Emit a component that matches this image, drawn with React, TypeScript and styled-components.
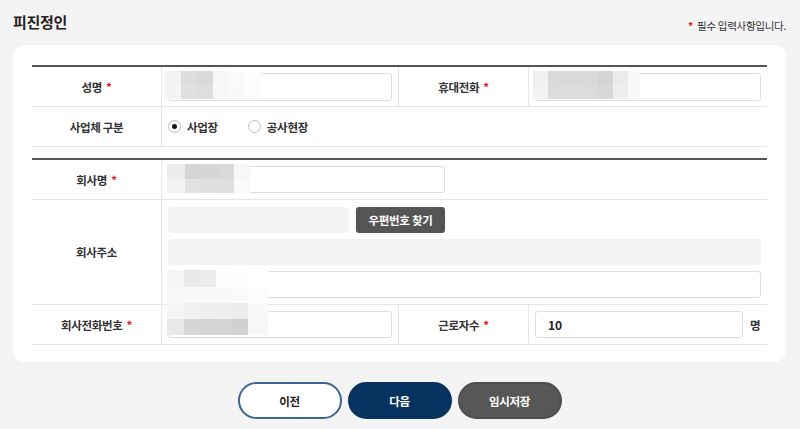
import React from "react";
import styled, { createGlobalStyle } from "styled-components";

const Global = createGlobalStyle`
  html, body { margin: 0; padding: 0; background: #f4f4f4; }
  body { font-family: "Noto Sans CJK KR", "Noto Sans", sans-serif; color: #333; }
  * { box-sizing: border-box; }
`;

const Page = styled.div`
  position: relative;
  width: 800px;
  height: 429px;
  padding: 0 14px 0 13px;
  background: #f4f4f4;
`;

const Header = styled.div`
  height: 45px;
  display: flex;
  align-items: center;
  justify-content: space-between;
`;

const Title = styled.h2`
  margin: 0 0 2px 0;
  font-size: 15px;
  font-weight: 700;
  color: #222;
  letter-spacing: -0.3px;
`;

const Note = styled.span`
  margin-top: 6px;
  font-size: 10.5px;
  color: #333;
  letter-spacing: -0.3px;
`;

const Star = styled.span<{ $lead?: boolean }>`
  color: #e3141c;
  font-weight: 700;
  margin: ${(p) => (p.$lead ? "0 4px 0 0" : "0 0 0 4px")};
`;

const Card = styled.div`
  background: #fff;
  border-radius: 12px;
  padding: 20px 19px 19px 19px;
  height: 317px;
`;

const Table = styled.div<{ $gap?: number }>`
  display: grid;
  grid-template-columns: 130px 237px 130px 1fr;
  border-top: 2px solid #555;
  margin-top: ${(p) => p.$gap ?? 0}px;
`;

const Label = styled.div<{ $h?: number }>`
  height: ${(p) => p.$h ?? 40}px;
  display: flex;
  align-items: center;
  justify-content: center;
  font-size: 11.5px;
  font-weight: 700;
  color: #333;
  border-bottom: 1px solid #e6e6e6;
  border-right: 1px solid #e6e6e6;
  letter-spacing: -0.3px;
`;

const Cell = styled.div<{ $span?: number; $last?: boolean; $col?: boolean }>`
  grid-column: span ${(p) => p.$span ?? 1};
  display: flex;
  flex-direction: ${(p) => (p.$col ? "column" : "row")};
  align-items: ${(p) => (p.$col ? "stretch" : "center")};
  justify-content: ${(p) => (p.$col ? "center" : "flex-start")};
  gap: 6px;
  padding: 0 6px;
  border-bottom: 1px solid #e6e6e6;
  border-right: ${(p) => (p.$last ? "none" : "1px solid #e6e6e6")};
`;

const Input = styled.div<{ $w?: number; $h?: number; $gray?: boolean }>`
  width: ${(p) => (p.$w ? `${p.$w}px` : "100%")};
  flex: none;
  height: ${(p) => p.$h ?? 27}px;
  border: 1px solid ${(p) => (p.$gray ? "#f3f3f3" : "#dedede")};
  background: ${(p) => (p.$gray ? "#f3f3f3" : "#fff")};
  border-radius: 3px;
  display: flex;
  align-items: center;
  padding: 0 12px;
  font-size: 12px;
  font-weight: 700;
  color: #222;
`;

const InputLine = styled.div`
  display: flex;
  align-items: center;
  gap: 7px;
`;

const DarkButton = styled.button`
  width: 89px;
  height: 26px;
  border: none;
  border-radius: 3px;
  background: #555;
  color: #fff;
  font-family: inherit;
  font-size: 11.5px;
  font-weight: 700;
  letter-spacing: -0.3px;
  padding: 0;
`;

const Unit = styled.span`
  font-size: 11.5px;
  font-weight: 700;
  color: #333;
  margin-left: 1px;
`;

const RadioGroup = styled.div`
  display: flex;
  align-items: center;
  gap: 30px;
`;

const RadioItem = styled.label`
  display: flex;
  align-items: center;
  gap: 6px;
  font-size: 11.5px;
  font-weight: 700;
  color: #333;
  letter-spacing: -0.3px;
`;

const RadioDot = styled.span<{ $on?: boolean }>`
  width: 13px;
  height: 13px;
  border-radius: 50%;
  border: 1px solid #bdbdbd;
  background: #fff;
  display: flex;
  align-items: center;
  justify-content: center;
  &::after {
    content: "";
    width: 5px;
    height: 5px;
    border-radius: 50%;
    background: ${(p) => (p.$on ? "#111" : "transparent")};
  }
`;

const Buttons = styled.div`
  display: flex;
  justify-content: center;
  gap: 6px;
  margin-top: 20px;
`;

const Pill = styled.button<{ $variant: "outline" | "navy" | "gray" }>`
  width: 104px;
  height: 37px;
  border-radius: 19px;
  font-family: inherit;
  font-size: 11.5px;
  font-weight: 700;
  letter-spacing: -0.3px;
  border: 2px solid
    ${(p) => (p.$variant === "outline" ? "#3c6592" : p.$variant === "navy" ? "#0a3360" : "#4d4d4d")};
  background: ${(p) => (p.$variant === "outline" ? "#fff" : p.$variant === "navy" ? "#06335f" : "#575757")};
  color: ${(p) => (p.$variant === "outline" ? "#222" : "#fff")};
`;

const MosaicBox = styled.div`
  position: absolute;
  display: flex;
  flex-direction: column;
  pointer-events: none;
`;

const MosaicRow = styled.div`
  display: flex;
`;

const Tile = styled.div`
  flex: none;
`;

type MosaicProps = { x: number; y: number; cw: number[]; rh: number[]; colors: string[][] };

const Mosaic = ({ x, y, cw, rh, colors }: MosaicProps) => (
  <MosaicBox style={{ left: x, top: y }}>
    {colors.map((row, ri) => (
      <MosaicRow key={ri}>
        {row.map((c, ci) => (
          <Tile key={ci} style={{ width: cw[ci], height: rh[ri], background: c }} />
        ))}
      </MosaicRow>
    ))}
  </MosaicBox>
);

export default function App() {
  return (
    <>
      <Global />
      <Page>
        <Header>
          <Title>피진정인</Title>
          <Note>
            <Star $lead>*</Star>필수 입력사항입니다.
          </Note>
        </Header>
        <Card>
          <Table>
            <Label>
              성명<Star>*</Star>
            </Label>
            <Cell>
              <Input $h={28} />
            </Cell>
            <Label>
              휴대전화<Star>*</Star>
            </Label>
            <Cell $last>
              <Input $h={28} />
            </Cell>
            <Label>사업체 구분</Label>
            <Cell $span={3} $last>
              <RadioGroup>
                <RadioItem>
                  <RadioDot $on />
                  사업장
                </RadioItem>
                <RadioItem>
                  <RadioDot />
                  공사현장
                </RadioItem>
              </RadioGroup>
            </Cell>
          </Table>
          <Table $gap={11}>
            <Label>
              회사명<Star>*</Star>
            </Label>
            <Cell $span={3} $last>
              <Input $w={277} />
            </Cell>
            <Label $h={105}>회사주소</Label>
            <Cell $span={3} $last $col>
              <InputLine>
                <Input $w={181} $h={26} $gray />
                <DarkButton>우편번호 찾기</DarkButton>
              </InputLine>
              <Input $h={26} $gray />
              <Input $h={27} />
            </Cell>
            <Label>
              회사전화번호<Star>*</Star>
            </Label>
            <Cell>
              <Input />
            </Cell>
            <Label>
              근로자수<Star>*</Star>
            </Label>
            <Cell $last>
              <Input $w={208}>10</Input>
              <Unit>명</Unit>
            </Cell>
          </Table>
        </Card>
        <Buttons>
          <Pill $variant="outline">이전</Pill>
          <Pill $variant="navy">다음</Pill>
          <Pill $variant="gray">임시저장</Pill>
        </Buttons>
        <Mosaic
          x={165}
          y={71}
          cw={[16, 16, 16, 16, 16, 17]}
          rh={[14, 14]}
          colors={[
            ["#f2f2f2", "#dddddd", "#d9d9d9", "#f7f7f7", "#fafafa", "#fcfcfc"],
            ["#f4f4f4", "#e0e0e0", "#dedede", "#f7f7f7", "#f9f9f9", "#fcfcfc"],
          ]}
        />
        <Mosaic
          x={533}
          y={71}
          cw={[15, 17, 17, 15, 16, 15, 12]}
          rh={[14, 14]}
          colors={[
            ["#f0f0f0", "#dadada", "#d9d9d9", "#dadada", "#d4d4d4", "#ebebeb", "#f8f8f8"],
            ["#f2f2f2", "#dcdcdc", "#dcdcdc", "#dcdcdc", "#d8d8d8", "#eeeeee", "#f9f9f9"],
          ]}
        />
        <Mosaic
          x={167}
          y={164}
          cw={[18, 16, 17, 16, 16]}
          rh={[15, 14]}
          colors={[
            ["#ececec", "#d5d5d5", "#d6d6d6", "#d9d9d9", "#f7f7f7"],
            ["#f2f2f2", "#e2e2e2", "#e0e0e0", "#dfdfdf", "#fafafa"],
          ]}
        />
        <Mosaic
          x={167}
          y={270}
          cw={[17, 16, 16, 16, 16, 20]}
          rh={[17, 16, 16, 16]}
          colors={[
            ["#f6f6f6", "#e8e8e8", "#ebebeb", "#fcfcfc", "#fdfdfd", "#ffffff"],
            ["#f8f8f8", "#f9f9f9", "#f8f8f8", "#f9f9f9", "#fafafa", "#fcfcfc"],
            ["#f6f6f6", "#f0f0f0", "#efefef", "#efefef", "#ececec", "#f9f9f9"],
            ["#e8e8e8", "#d6d6d6", "#d4d4d4", "#d5d5d5", "#d1d1d1", "#f8f8f8"],
          ]}
        />
      </Page>
    </>
  );
}
